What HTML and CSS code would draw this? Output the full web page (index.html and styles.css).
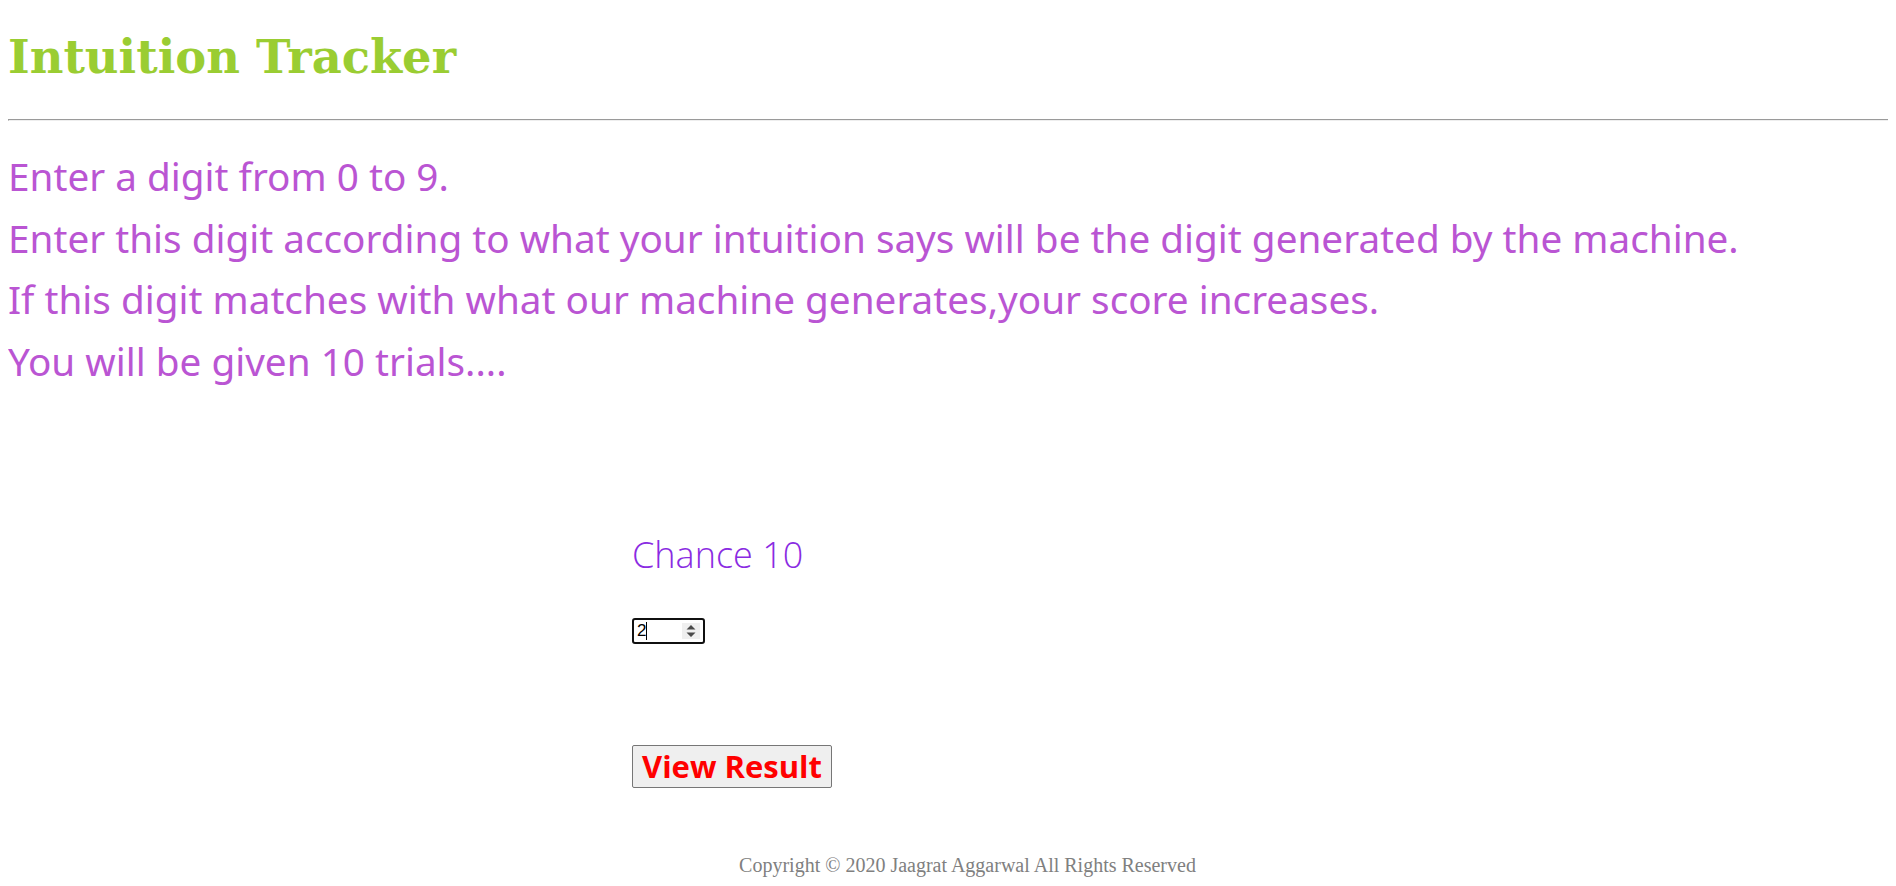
FILE: index.html
```html
<!DOCTYPE html>
<html>
<head>
<meta charset="utf-8">
<title>Intuition Tracker</title>
<link rel="stylesheet" href="styles.css">
</head>
<body>
<header class="top">
  <h1 class="brand">Intuition Tracker</h1>
  <hr class="rule">
</header>
<section class="rules">
  <p class="rule-line">Enter a digit from 0 to 9.</p>
  <p class="rule-line">Enter this digit according to what your intuition says will be the digit generated by the machine.</p>
  <p class="rule-line">If this digit matches with what our machine generates,your score increases.</p>
  <p class="rule-line">You will be given 10 trials....</p>
</section>
<main class="game">
  <h2 class="chance">Chance 10</h2>
  <div class="digit-wrap">
    <input class="digit" type="number" value="2">
    <span class="caret"></span>
    <span class="spin"><svg width="10" height="14" viewBox="0 0 10 14"><path d="M5 1 L9.5 5.5 L0.5 5.5 Z M5 13 L9.5 8.5 L0.5 8.5 Z" fill="#4a4a4a"/></svg></span>
  </div>
  <button class="result">View Result</button>
</main>
<footer class="foot">Copyright © 2020 Jaagrat Aggarwal All Rights Reserved</footer>
</body>
</html>
```
FILE: styles.css
```css
html {
  overflow: hidden;
}
body {
  margin: 8px;
  font-family: "Liberation Serif", serif;
}
.top {
  margin-right: -40px;
}
.brand {
  font-family: "DejaVu Serif", serif;
  font-weight: bold;
  color: #9acd32;
  font-size: 46.4px;
  line-height: 54px;
  margin: 22px 0 35px;
}
.rule {
  display: block;
  box-sizing: border-box;
  width: auto;
  margin: 0;
  border: 0;
  height: 2px;
  border-top: 1px solid #9a9a9a;
  border-bottom: 1px solid #eeeeee;
  border-left: 1px solid #9a9a9a;
}
.rules {
  padding-top: 25px;
}
.rule-line {
  font-family: "Noto Sans", sans-serif;
  color: #ba55d3;
  font-size: 38.7px;
  line-height: 61.7px;
  margin: 0;
  white-space: nowrap;
}
.game {
  padding-left: 624px;
  padding-top: 137px;
  display: flex;
  flex-direction: column;
  align-items: flex-start;
}
.chance {
  font-family: "Open Sans", sans-serif;
  font-weight: 300;
  color: #8a2be2;
  font-size: 36px;
  line-height: 49px;
  margin: 0 0 39px;
}
.digit-wrap {
  position: relative;
  width: 73px;
  height: 26px;
}
.digit {
  box-sizing: border-box;
  width: 73px;
  height: 26px;
  margin: 0;
  border: 2px solid #101010;
  border-radius: 3px;
  padding: 0 0 0 3px;
  font-family: "Liberation Sans", sans-serif;
  font-size: 17px;
  color: #000;
  background: #fff;
  outline: none;
  -moz-appearance: textfield;
}
.digit::-webkit-inner-spin-button,
.digit::-webkit-outer-spin-button {
  -webkit-appearance: none;
  margin: 0;
}
.caret {
  position: absolute;
  left: 14px;
  top: 4px;
  width: 1px;
  height: 18px;
  background: #000;
}
.spin {
  position: absolute;
  right: 5px;
  top: 5px;
  width: 18px;
  height: 16px;
  background: #efefef;
  display: flex;
  align-items: center;
  justify-content: center;
}
.result {
  margin-top: 101px;
  box-sizing: border-box;
  height: 43px;
  padding: 0 9px;
  font-family: "Open Sans", sans-serif;
  font-weight: bold;
  color: #ff0000;
  font-size: 31px;
  line-height: 41px;
  background: #efefef;
  border: 1px solid #767676;
  border-radius: 2px;
}
.foot {
  text-align: center;
  padding-left: 39px;
  color: #808080;
  font-size: 20px;
  line-height: 23px;
  margin-top: 66px;
}
```
